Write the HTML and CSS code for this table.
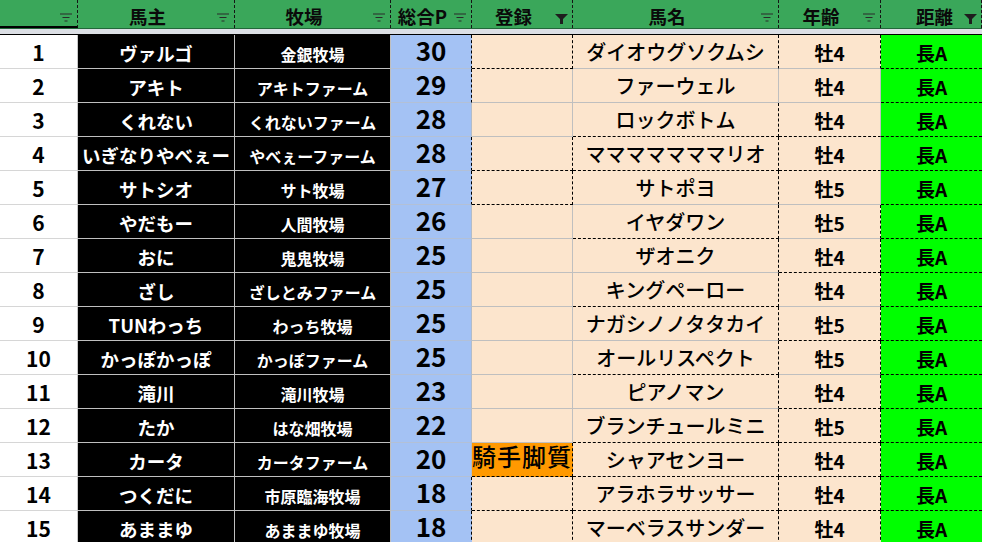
FILE: index.html
```html
<!DOCTYPE html>
<html lang="ja">
<head>
<meta charset="utf-8">
<title>馬主一覧</title>
<link rel="stylesheet" href="styles.css">
</head>
<body>
<div class="sheet">
  <div class="head">
    <div class="hc hc-a"><span class="t"></span><svg class="fi" viewBox="0 0 12 9"><path d="M0 1h12M2.5 4.5h7M4.5 8h3" stroke="#2a2a2a" stroke-width="1.2"/></svg></div>
    <div class="hc"><span class="t">馬主</span><svg class="fi" viewBox="0 0 12 9"><path d="M0 1h12M2.5 4.5h7M4.5 8h3" stroke="#2a2a2a" stroke-width="1.2"/></svg></div>
    <div class="hc"><span class="t">牧場</span><svg class="fi" viewBox="0 0 12 9"><path d="M0 1h12M2.5 4.5h7M4.5 8h3" stroke="#2a2a2a" stroke-width="1.2"/></svg></div>
    <div class="hc"><span class="t">総合P</span><svg class="fi" viewBox="0 0 12 9"><path d="M0 1h12M2.5 4.5h7M4.5 8h3" stroke="#2a2a2a" stroke-width="1.2"/></svg></div>
    <div class="hc"><span class="t">登録</span><svg class="ff" viewBox="0 0 13 10"><polygon points="0,0 13,0 8,5 8,10 5,10 5,5" fill="#1e1e1e"/></svg></div>
    <div class="hc"><span class="t">馬名</span><svg class="fi" viewBox="0 0 12 9"><path d="M0 1h12M2.5 4.5h7M4.5 8h3" stroke="#2a2a2a" stroke-width="1.2"/></svg></div>
    <div class="hc"><span class="t">年齢</span><svg class="fi" viewBox="0 0 12 9"><path d="M0 1h12M2.5 4.5h7M4.5 8h3" stroke="#2a2a2a" stroke-width="1.2"/></svg></div>
    <div class="hc hc-h"><span class="t">距離</span><svg class="ff" viewBox="0 0 13 10"><polygon points="0,0 13,0 8,5 8,10 5,10 5,5" fill="#1e1e1e"/></svg></div>
  </div>
  <div class="freeze"></div>

  <div class="row">
    <div class="c ca">1</div><div class="c cb">ヴァルゴ</div><div class="c cc">金銀牧場</div><div class="c cd dr">30</div><div class="c ce dr db"></div><div class="c cf dr">ダイオウグソクムシ</div><div class="c cg dr">牡4</div><div class="c ch db">長A</div>
  </div>
  <div class="row">
    <div class="c ca">2</div><div class="c cb">アキト</div><div class="c cc">アキトファーム</div><div class="c cd dr">29</div><div class="c ce"></div><div class="c cf">ファーウェル</div><div class="c cg">牡4</div><div class="c ch db">長A</div>
  </div>
  <div class="row">
    <div class="c ca">3</div><div class="c cb">くれない</div><div class="c cc">くれないファーム</div><div class="c cd">28</div><div class="c ce"></div><div class="c cf dr db">ロックボトム</div><div class="c cg db">牡4</div><div class="c ch db">長A</div>
  </div>
  <div class="row">
    <div class="c ca">4</div><div class="c cb">いぎなりやべぇー</div><div class="c cc">やべぇーファーム</div><div class="c cd dr">28</div><div class="c ce dr db"></div><div class="c cf dr db">マママママママリオ</div><div class="c cg db">牡4</div><div class="c ch db">長A</div>
  </div>
  <div class="row">
    <div class="c ca">5</div><div class="c cb">サトシオ</div><div class="c cc">サト牧場</div><div class="c cd dr">27</div><div class="c ce dr db"></div><div class="c cf dr">サトポヨ</div><div class="c cg">牡5</div><div class="c ch db">長A</div>
  </div>
  <div class="row">
    <div class="c ca">6</div><div class="c cb">やだもー</div><div class="c cc">人間牧場</div><div class="c cd">26</div><div class="c ce"></div><div class="c cf dr db">イヤダワン</div><div class="c cg dr">牡5</div><div class="c ch db">長A</div>
  </div>
  <div class="row">
    <div class="c ca">7</div><div class="c cb">おに</div><div class="c cc">鬼鬼牧場</div><div class="c cd">25</div><div class="c ce"></div><div class="c cf dr">ザオニク</div><div class="c cg dr db">牡4</div><div class="c ch db">長A</div>
  </div>
  <div class="row">
    <div class="c ca">8</div><div class="c cb">ざし</div><div class="c cc">ざしとみファーム</div><div class="c cd">25</div><div class="c ce"></div><div class="c cf dr db">キングペーロー</div><div class="c cg dr">牡4</div><div class="c ch db">長A</div>
  </div>
  <div class="row">
    <div class="c ca">9</div><div class="c cb">TUNわっち</div><div class="c cc">わっち牧場</div><div class="c cd">25</div><div class="c ce"></div><div class="c cf dr">ナガシノノタタカイ</div><div class="c cg dr db">牡5</div><div class="c ch db">長A</div>
  </div>
  <div class="row">
    <div class="c ca">10</div><div class="c cb">かっぽかっぽ</div><div class="c cc">かっぽファーム</div><div class="c cd">25</div><div class="c ce"></div><div class="c cf dr db">オールリスペクト</div><div class="c cg dr">牡5</div><div class="c ch db">長A</div>
  </div>
  <div class="row">
    <div class="c ca">11</div><div class="c cb">滝川</div><div class="c cc">滝川牧場</div><div class="c cd">23</div><div class="c ce"></div><div class="c cf dr">ピアノマン</div><div class="c cg dr db">牡4</div><div class="c ch db">長A</div>
  </div>
  <div class="row">
    <div class="c ca">12</div><div class="c cb">たか</div><div class="c cc">はな畑牧場</div><div class="c cd">22</div><div class="c ce"></div><div class="c cf dr db">ブランチュールミニ</div><div class="c cg dr db">牡5</div><div class="c ch db">長A</div>
  </div>
  <div class="row">
    <div class="c ca">13</div><div class="c cb">カータ</div><div class="c cc">カータファーム</div><div class="c cd">20</div><div class="c ce ce-tag dr db">騎手脚質</div><div class="c cf dr db">シャアセンヨー</div><div class="c cg dr db">牡4</div><div class="c ch db">長A</div>
  </div>
  <div class="row">
    <div class="c ca">14</div><div class="c cb">つくだに</div><div class="c cc">市原臨海牧場</div><div class="c cd dr">18</div><div class="c ce dr db"></div><div class="c cf dr db">アラホラサッサー</div><div class="c cg dr db">牡4</div><div class="c ch db">長A</div>
  </div>
  <div class="row">
    <div class="c ca">15</div><div class="c cb">あままゆ</div><div class="c cc">あままゆ牧場</div><div class="c cd dr">18</div><div class="c ce dr"></div><div class="c cf dr">マーベラスサンダー</div><div class="c cg dr">牡4</div><div class="c ch">長A</div>
  </div>
</div>
</body>
</html>
```

FILE: styles.css
```css
html, body {
  margin: 0;
  padding: 0;
  background: #ffffff;
  overflow: hidden;
}

body {
  font-family: "Noto Sans CJK JP", "Noto Sans", sans-serif;
  color: #000;
}

.sheet {
  width: 982px;
}

.head,
.row {
  display: grid;
  grid-template-columns: 78px 157px 156px 81px 101px 206px 102px 101px;
}

.head {
  height: 29px;
  background: #3aa75a;
  border-bottom: 1px solid #22683a;
  box-sizing: border-box;
}

.hc {
  display: grid;
  grid-template-columns: 1fr auto;
  border-right: 1px dashed #151515;
  font-size: 18.5px;
  font-weight: 700;
  line-height: 1;
  color: #0a0a0a;
}

.hc-a {
  border-bottom: 2px solid #000;
}

.hc .t {
  align-self: end;
  text-align: center;
  padding-bottom: 3px;
  white-space: nowrap;
}

.hc-h .t {
  padding-left: 24px;
}

.fi {
  width: 12px;
  height: 9px;
  margin: 13px 5px 0 0;
}

.ff {
  width: 13px;
  height: 10px;
  margin: 14px 4px 0 0;
}

.freeze {
  height: 5px;
  background: #dcdfe5;
  border-bottom: 1px solid #000;
}

.row {
  height: 34px;
}

.c {
  box-sizing: border-box;
  display: flex;
  align-items: flex-end;
  justify-content: center;
  border-right: 1px solid #bfbfbf;
  border-bottom: 1px solid #bfbfbf;
  line-height: 1;
  padding-bottom: 6px;
  font-weight: 700;
  white-space: nowrap;
}

.ca {
  background: #ffffff;
  font-size: 21px;
  padding-bottom: 5px;
  border-right-color: #c8c8c8;
  border-bottom-color: #d6d6d6;
}

.cb {
  background: #000;
  color: #fff;
  font-size: 18.5px;
}

.cc {
  background: #000;
  color: #fff;
  font-size: 16px;
}

.cd {
  background: #a4c2f4;
  font-size: 26px;
  padding-bottom: 5px;
  border-bottom-color: #b3c0d6;
  border-right-color: #b3bcc8;
}

.ce {
  background: #fce5cd;
}

.ce-tag {
  background: #ff9900;
  font-size: 24px;
  font-weight: 500;
  letter-spacing: 1px;
  padding-bottom: 8px;
}

.cf {
  background: #fce5cd;
  font-size: 20px;
  font-weight: 500;
}

.cg {
  background: #fce5cd;
  font-size: 19px;
}

.ch {
  background: #00ff00;
  font-size: 19px;
  border-right: none;
}

.dr {
  border-right: 1px dashed #000;
}

.db {
  border-bottom: 1px dashed #000;
}
```
